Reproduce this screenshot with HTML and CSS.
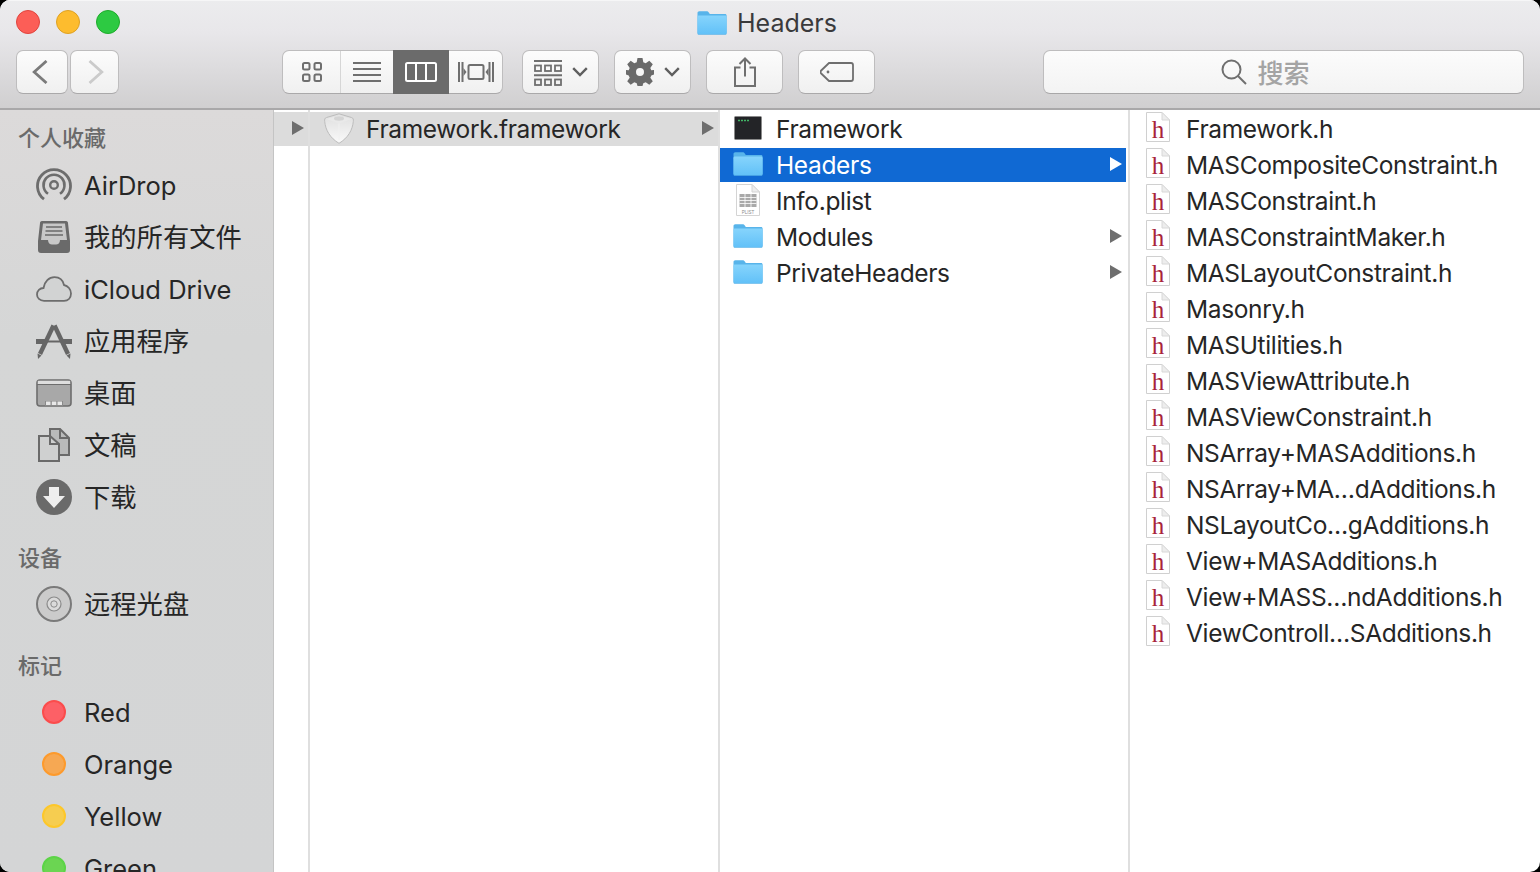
FILE: index.html
```html
<!DOCTYPE html>
<html lang="zh">
<head>
<meta charset="utf-8">
<title>Headers</title>
<link rel="stylesheet" href="styles.css">
</head>
<body>
<svg class="defs" width="0" height="0" aria-hidden="true">
  <defs>
    <linearGradient id="fg" x1="0" y1="0" x2="0" y2="1"><stop offset="0" stop-color="#86d4fc"/><stop offset="1" stop-color="#62c1f8"/></linearGradient>
    <linearGradient id="cube" x1="0" y1="0" x2="0" y2="1"><stop offset="0" stop-color="#dedede"/><stop offset="1" stop-color="#fafafa"/></linearGradient>
    <symbol id="folder" viewBox="0 0 30 24">
      <path d="M0.500 2.200C0.500 1 1.200 0.300 2.400 0.300H9.600C10.600 0.300 11.200 0.800 11.800 1.600L12.800 2.900H28C29 2.900 29.600 3.500 29.600 4.500V22.200C29.600 23.200 29 23.800 28 23.800H2C1 23.800 0.500 23.200 0.500 22.200Z" fill="#58b4ea"/>
      <path d="M0.500 6.200C0.500 5 1.200 4.600 2.200 4.600H28C29 4.600 29.600 5.100 29.600 6.200V21.600C29.600 22.600 29 23 28 23H2C1 23 0.500 22.600 0.500 21.600Z" fill="url(#fg)"/>
    </symbol>
    <symbol id="hfile" viewBox="0 0 24 30">
      <path d="M0.500 0.500H16L23.500 8V29.500H0.500Z" fill="#fff" stroke="#d0d0d0"/>
      <path d="M16 0.500V8H23.500Z" fill="#ededed" stroke="#d8d8d8"/>
    </symbol>
  </defs>
</svg>
<div class="window">
  <header class="toolbar">
    <div class="titlebar">
      <div class="lights">
        <span class="light red"></span><span class="light yellow"></span><span class="light green"></span>
      </div>
      <div class="title"><svg class="title-folder"><use href="#folder"/></svg><span>Headers</span></div>
    </div>
    <div class="tools">
      <div class="nav">
        <button class="btn back"><svg width="16" height="24" viewBox="0 0 16 24"><path d="M14.500 1L2.200 12L14.500 23" fill="none" stroke="#7b7b7b" stroke-width="2.800"/></svg></button>
        <button class="btn forward"><svg width="16" height="24" viewBox="0 0 16 24"><path d="M1.500 1L13.800 12L1.500 23" fill="none" stroke="#cbcbcb" stroke-width="2.800"/></svg></button>
      </div>
      <div class="seg">
        <div class="seg-cell c1"><svg width="22" height="22" viewBox="0 0 22 22" fill="none" stroke="#6f6f6f" stroke-width="2"><rect x="2" y="2" width="6.500" height="6.500" rx="1.500"/><rect x="13.500" y="2" width="6.500" height="6.500" rx="1.500"/><rect x="2" y="13.500" width="6.500" height="6.500" rx="1.500"/><rect x="13.500" y="13.500" width="6.500" height="6.500" rx="1.500"/></svg></div>
        <div class="seg-cell c2"><svg width="28" height="20" viewBox="0 0 28 20" fill="#6f6f6f"><rect y="0" width="28" height="2"/><rect y="6" width="28" height="2"/><rect y="12" width="28" height="2"/><rect y="18" width="28" height="2"/></svg></div>
        <div class="seg-cell c3"><svg width="32" height="20" viewBox="0 0 32 20" fill="none" stroke="#fff" stroke-width="2"><rect x="1" y="1" width="30" height="18" rx="1.500"/><path d="M11 1V19M21 1V19"/></svg></div>
        <div class="seg-cell c4"><svg width="36" height="20" viewBox="0 0 36 20"><g fill="#6f6f6f"><rect x="0" y="0" width="2" height="20"/><rect x="3.500" y="0" width="2" height="20"/><rect x="30.500" y="0" width="2" height="20"/><rect x="34" y="0" width="2" height="20"/><path d="M5.500 6L8.500 10L5.500 14Z"/><path d="M30.500 6L27.500 10L30.500 14Z"/></g><rect x="10.500" y="3" width="15" height="14" rx="1.500" fill="none" stroke="#6f6f6f" stroke-width="2"/></svg></div>
      </div>
      <button class="btn drop arrange">
        <svg class="arrange-icon" width="28" height="26" viewBox="0 0 28 26" fill="none" stroke="#6f6f6f" stroke-width="1.800"><path d="M0 1H28M0 15.200H28" stroke-width="2"/><rect x="1" y="5.500" width="6" height="5.500"/><rect x="11" y="5.500" width="6" height="5.500"/><rect x="21" y="5.500" width="6" height="5.500"/><rect x="1" y="19.500" width="6" height="5.500"/><rect x="11" y="19.500" width="6" height="5.500"/><rect x="21" y="19.500" width="6" height="5.500"/></svg>
        <svg class="chev" width="16" height="10" viewBox="0 0 16 10"><path d="M1.200 1.200L8 8L14.800 1.200" fill="none" stroke="#5f5f5f" stroke-width="2.400"/></svg>
      </button>
      <button class="btn drop gear">
        <svg width="28" height="28" viewBox="0 0 28 28"><path fill="#6a6a6a" fill-rule="evenodd" d="M11.500 0H16.500L17.300 4.300L19.700 5.300L23.300 2.800L26.800 6.300L24.300 9.900L25.300 12.200L28 12.100V16.600L25.300 17.400L24.300 19.700L26.800 23.300L23.300 26.800L19.700 24.300L17.300 25.300L16.500 28H11.500L10.700 25.300L8.300 24.300L4.700 26.800L1.200 23.300L3.700 19.700L2.700 17.400L0 16.600V12.100L2.700 12.200L3.700 9.900L1.200 6.300L4.700 2.800L8.300 5.300L10.700 4.300ZM14 10A4 4 0 1 0 14 18A4 4 0 1 0 14 10Z"/></svg>
        <svg class="chev" width="16" height="10" viewBox="0 0 16 10"><path d="M1.200 1.200L8 8L14.800 1.200" fill="none" stroke="#5f5f5f" stroke-width="2.400"/></svg>
      </button>
      <button class="btn wide share"><svg width="24" height="30" viewBox="0 0 24 30" fill="none" stroke="#6f6f6f" stroke-width="2"><path d="M7.500 10.500H2V29H22V10.500H16.500"/><path d="M12 19.500V1.500M6.500 7L12 1.500L17.500 7"/></svg></button>
      <button class="btn wide tag"><svg width="34" height="20" viewBox="0 0 34 20" fill="none" stroke="#6f6f6f" stroke-width="1.800"><path d="M9 1H31C32.200 1 33 1.800 33 3V17C33 18.200 32.200 19 31 19H9L1.200 11.500C0.400 10.700 0.400 9.300 1.200 8.500Z"/><circle cx="8" cy="10" r="1.400" fill="#6f6f6f" stroke="none"/></svg></button>
      <div class="search">
        <svg width="26" height="26" viewBox="0 0 26 26" fill="none" stroke="#6f6f6f" stroke-width="2"><circle cx="10.500" cy="10.500" r="9"/><path d="M17 17L25 25"/></svg>
        <span>搜索</span>
      </div>
    </div>
  </header>
  <div class="main">
    <aside class="sidebar">
      <h2 class="side-head first">个人收藏</h2>
      <div class="side-item"><span class="side-icon"><svg width="36" height="36" viewBox="0 0 36 36" fill="none" stroke="#6d6d6d"><circle cx="18" cy="18" r="3.800" stroke-width="2.400"/><path d="M12 26.800A10.500 10.500 0 1 1 24 26.800" stroke-width="2.600"/><path d="M8 32.200A16.500 16.500 0 1 1 28 32.200" stroke-width="2.800"/></svg></span><span>AirDrop</span></div>
      <div class="side-item"><span class="side-icon"><svg width="32" height="32" viewBox="0 0 32 32"><path d="M4 0H28C29.500 0 30 1 30 2L32 20V29C32 31 31 32 29 32H3C1 32 0 31 0 29V20L2 2C2 1 2.500 0 4 0Z" fill="#6a6a6a"/><path d="M5 2.500H27L29 19H22C22 22 20 23.500 18 23.500H14C12 23.500 10 22 10 19H3Z" fill="#c8c8c8"/><path d="M8 6H24M7.500 10H24.500M7 14H25" stroke="#6a6a6a" stroke-width="1.600"/></svg></span><span class="cjk">我的所有文件</span></div>
      <div class="side-item"><span class="side-icon"><svg width="36" height="26" viewBox="0 0 36 26"><path d="M8 24.800C3.800 24.800 1 22 1 18.500C1 14.800 3.800 12 7.500 12C8.500 5.500 13 1.200 18.500 1.200C23.500 1.200 27 4.500 28 9C32 9.800 35 13.500 35 17.500C35 22 32 24.800 28 24.800Z" fill="#d2d3d3" stroke="#6d6d6d" stroke-width="1.800"/></svg></span><span>iCloud Drive</span></div>
      <div class="side-item"><span class="side-icon"><svg width="36" height="35" viewBox="0 0 36 35" fill="none" stroke="#666"><path d="M18.500 1.500L32 30" stroke-width="4.400"/><path d="M17.500 1.500L4 30" stroke-width="4.400"/><path d="M0 17.500H9M27 17.500H36" stroke-width="5"/><path d="M9 17.500H27" stroke-width="2"/><path d="M1.500 29.500L5.500 31.500L2 35Z" fill="#666" stroke="none"/><path d="M34.500 29.500L30.500 31.500L34 35Z" fill="#666" stroke="none"/></svg></span><span class="cjk">应用程序</span></div>
      <div class="side-item"><span class="side-icon"><svg width="36" height="28" viewBox="0 0 36 28"><rect x="1" y="1" width="34" height="26" rx="3" fill="#a8a8a8" stroke="#6d6d6d" stroke-width="1.600"/><rect x="1.800" y="1.800" width="32.400" height="3.600" fill="#dedede"/><path d="M1 5.500H35" stroke="#6d6d6d"/><rect x="9" y="22" width="18" height="5" fill="#8a8a8a"/><g fill="#e8e8e8"><rect x="10" y="22.500" width="4.500" height="3.500"/><rect x="15.800" y="22.500" width="4.500" height="3.500"/><rect x="21.500" y="22.500" width="4.500" height="3.500"/></g></svg></span><span class="cjk">桌面</span></div>
      <div class="side-item"><span class="side-icon"><svg width="32" height="34" viewBox="0 0 32 34" stroke="#6a6a6a" stroke-width="2"><path d="M12 1H22L31 10V27H12Z" fill="#b9baba"/><path d="M22 1V10H31" fill="none"/><path d="M1 8H12L21 16V33H1Z" fill="#cfd0d0"/><path d="M12 8V16H21" fill="none"/></svg></span><span class="cjk">文稿</span></div>
      <div class="side-item"><span class="side-icon"><svg width="36" height="36" viewBox="0 0 36 36"><circle cx="18" cy="18" r="18" fill="#6a6a6a"/><path d="M13 8H23V17H29L18 29L7 17H13Z" fill="#eeeeee"/></svg></span><span class="cjk">下载</span></div>
      <h2 class="side-head">设备</h2>
      <div class="side-item"><span class="side-icon"><svg width="36" height="36" viewBox="0 0 36 36" fill="none"><circle cx="18" cy="18" r="17" fill="#cbcbcb" stroke="#7a7a7a" stroke-width="2"/><circle cx="18" cy="18" r="7" fill="#dadada" stroke="#8a8a8a" stroke-width="1.200"/><circle cx="18" cy="18" r="3.200" stroke="#8a8a8a" stroke-width="1"/></svg></span><span class="cjk">远程光盘</span></div>
      <h2 class="side-head tags-head">标记</h2>
      <div class="side-item"><span class="side-icon"><span class="tag-dot t-red"></span></span><span>Red</span></div>
      <div class="side-item"><span class="side-icon"><span class="tag-dot t-orange"></span></span><span>Orange</span></div>
      <div class="side-item"><span class="side-icon"><span class="tag-dot t-yellow"></span></span><span>Yellow</span></div>
      <div class="side-item"><span class="side-icon"><span class="tag-dot t-green"></span></span><span>Green</span></div>
    </aside>
    <section class="col col-0">
      <div class="row row-grey"><span class="arrow"></span></div>
    </section>
    <section class="col col-1">
      <div class="row row-grey"><span class="ficon bundle"><svg width="30" height="31" viewBox="0 0 30 31"><path d="M15 0.800L27.500 4.500C29.500 5.200 29.500 6.500 29.300 8.500C28.500 17 24 25 15 30.300C6 25 1.500 17 0.700 8.500C0.500 6.500 0.500 5.200 2.500 4.500Z" fill="url(#cube)" stroke="#bcbcbc"/><path d="M15 2.500L27.500 6L15 10.500L2.500 6Z" fill="#e9e9e9"/><ellipse cx="15" cy="5.500" rx="5" ry="2.200" fill="#d4d4d4"/><path d="M15 10.500V27" stroke="#f0f0f0"/></svg></span><span class="name">Framework.framework</span><span class="arrow"></span></div>
    </section>
    <section class="col col-2">
      <div class="row"><span class="ficon"><svg width="28" height="24" viewBox="0 0 28 24"><rect x="0.500" y="0.500" width="27" height="23" rx="1" fill="#232427" stroke="#8a8a8a"/><path d="M4 4.500H15" stroke="#41b565" stroke-width="1.600" stroke-dasharray="2 1"/></svg></span><span class="name">Framework</span></div>
      <div class="row selected"><span class="ficon"><svg class="folder"><use href="#folder"/></svg></span><span class="name">Headers</span><span class="arrow"></span></div>
      <div class="row"><span class="ficon"><svg width="24" height="32" viewBox="0 0 24 32"><path d="M0.500 0.500H16L23.500 8V31.500H0.500Z" fill="#fff" stroke="#d4d4d4"/><path d="M16 0.500V8H23.500Z" fill="#eee" stroke="#d4d4d4"/><g fill="#a9a9a9"><rect x="3.500" y="10" width="17" height="13"/></g><path d="M3.500 13.500H20.500M3.500 16.500H20.500M3.500 19.500H20.500M9 10V23M15 10V23" stroke="#fff" stroke-width="0.800"/><text x="12" y="29.500" class="plist-label">PLIST</text></svg></span><span class="name">Info.plist</span></div>
      <div class="row"><span class="ficon"><svg class="folder"><use href="#folder"/></svg></span><span class="name">Modules</span><span class="arrow"></span></div>
      <div class="row"><span class="ficon"><svg class="folder"><use href="#folder"/></svg></span><span class="name">PrivateHeaders</span><span class="arrow"></span></div>
    </section>
    <section class="col col-3">
      <div class="row"><span class="hicon"><svg class="hpage"><use href="#hfile"/></svg><span class="hletter">h</span></span><span class="name">Framework.h</span></div>
      <div class="row"><span class="hicon"><svg class="hpage"><use href="#hfile"/></svg><span class="hletter">h</span></span><span class="name">MASCompositeConstraint.h</span></div>
      <div class="row"><span class="hicon"><svg class="hpage"><use href="#hfile"/></svg><span class="hletter">h</span></span><span class="name">MASConstraint.h</span></div>
      <div class="row"><span class="hicon"><svg class="hpage"><use href="#hfile"/></svg><span class="hletter">h</span></span><span class="name">MASConstraintMaker.h</span></div>
      <div class="row"><span class="hicon"><svg class="hpage"><use href="#hfile"/></svg><span class="hletter">h</span></span><span class="name">MASLayoutConstraint.h</span></div>
      <div class="row"><span class="hicon"><svg class="hpage"><use href="#hfile"/></svg><span class="hletter">h</span></span><span class="name">Masonry.h</span></div>
      <div class="row"><span class="hicon"><svg class="hpage"><use href="#hfile"/></svg><span class="hletter">h</span></span><span class="name">MASUtilities.h</span></div>
      <div class="row"><span class="hicon"><svg class="hpage"><use href="#hfile"/></svg><span class="hletter">h</span></span><span class="name">MASViewAttribute.h</span></div>
      <div class="row"><span class="hicon"><svg class="hpage"><use href="#hfile"/></svg><span class="hletter">h</span></span><span class="name">MASViewConstraint.h</span></div>
      <div class="row"><span class="hicon"><svg class="hpage"><use href="#hfile"/></svg><span class="hletter">h</span></span><span class="name">NSArray+MASAdditions.h</span></div>
      <div class="row"><span class="hicon"><svg class="hpage"><use href="#hfile"/></svg><span class="hletter">h</span></span><span class="name">NSArray+MA…dAdditions.h</span></div>
      <div class="row"><span class="hicon"><svg class="hpage"><use href="#hfile"/></svg><span class="hletter">h</span></span><span class="name">NSLayoutCo…gAdditions.h</span></div>
      <div class="row"><span class="hicon"><svg class="hpage"><use href="#hfile"/></svg><span class="hletter">h</span></span><span class="name">View+MASAdditions.h</span></div>
      <div class="row"><span class="hicon"><svg class="hpage"><use href="#hfile"/></svg><span class="hletter">h</span></span><span class="name">View+MASS…ndAdditions.h</span></div>
      <div class="row"><span class="hicon"><svg class="hpage"><use href="#hfile"/></svg><span class="hletter">h</span></span><span class="name">ViewControll…SAdditions.h</span></div>
    </section>
  </div>
</div>
</body>
</html>
```
FILE: styles.css
```css
* { box-sizing: border-box; }
html, body { margin: 0; height: 100%; background: #000; overflow: hidden; }
body { font-family: Inter, "Noto Sans CJK SC", "Noto Sans", sans-serif; color: #262626; }
.defs { position: absolute; }
.window { width: 1540px; height: 872px; display: flex; flex-direction: column; border-radius: 10px; overflow: hidden; background: #fff; }

.toolbar { height: 110px; flex: none; background: linear-gradient(#ececee 0, #e8e7ea 30%, #d0cfd0 100%); border-bottom: 2px solid #a9a8a9; box-shadow: inset 0 1px 0 #f6f6f7; }
.titlebar { height: 50px; position: relative; display: flex; align-items: center; justify-content: center; padding: 0 6px 4px 0; }
.lights { position: absolute; left: 16px; top: 10px; display: flex; gap: 16px; }
.light { width: 24px; height: 24px; border-radius: 50%; border: 1px solid; }
.red { background: #fc5e57; border-color: #e0443e; }
.yellow { background: #fdbc2e; border-color: #dea123; }
.green { background: #2dca42; border-color: #1eab2b; }
.title { display: flex; align-items: center; gap: 10px; font-size: 25px; color: #3a3a3c; }
.title-folder { width: 30px; height: 24px; }

.tools { display: flex; height: 44px; padding-left: 16px; }
.btn { height: 44px; border: 1px solid #bebdbe; border-bottom-color: #aaa9aa; border-radius: 7px; background: linear-gradient(#fcfcfc, #f0f0f0); display: flex; align-items: center; justify-content: center; padding: 0; }
.nav { display: flex; gap: 2px; margin-right: 163px; }
.back { width: 52px; padding-right: 4px; }
.forward { width: 49px; padding-left: 3px; }
.seg { width: 221px; height: 44px; display: flex; border: 1px solid #bebdbe; border-bottom-color: #aaa9aa; border-radius: 7px; background: linear-gradient(#fcfcfc, #f0f0f0); margin-right: 19px; }
.seg-cell { display: flex; align-items: center; justify-content: center; height: 100%; }
.c1 { width: 58px; border-right: 1px solid #d6d6d6; }
.c2 { width: 52px; }
.c3 { width: 56px; height: calc(100% + 2px); margin: -1px 0; background: #6b6b6b; }
.c4 { flex: 1; }
.drop { width: 77px; gap: 10px; margin-right: 15px; }
.drop .chev { flex: none; }
.arrange-icon { margin-top: 1px; }
.wide { width: 77px; margin-right: 15px; }
.search { width: 481px; height: 44px; margin-left: 153px; padding: 0 36px 0 0; border: 1px solid #bebdbe; border-bottom-color: #a8a7a8; border-radius: 7px; background: linear-gradient(#fcfcfc, #f3f3f3); display: flex; align-items: center; justify-content: center; gap: 10px; font-size: 26px; font-weight: 500; color: #a4a4a4; }
.search span { margin-top: -2px; }

.main { flex: 1; display: flex; min-height: 0; }
.sidebar { width: 274px; flex: none; background: linear-gradient(#dcdada, #d5d6d6 30%, #d4d5d6); border-right: 1px solid #c4c4c4; overflow: hidden; padding-top: 13px; }
.side-head { margin: 20px 0 5px; height: 30px; line-height: 30px; padding-left: 18px; font-size: 22px; font-weight: 500; color: #6a6a6a; }
.side-head.first { margin: 0 0 6px; }
.side-head.tags-head { margin-top: 21px; }
.side-item { height: 52px; display: flex; align-items: center; font-size: 25.500px; color: #262626; padding-left: 36px; }
.cjk { font-size: 26.300px; padding-bottom: 4px; }
.side-icon { width: 36px; height: 36px; flex: none; display: flex; align-items: center; justify-content: center; margin-right: 12px; }
.tag-dot { width: 24px; height: 24px; border-radius: 50%; border: 2px solid; }
.t-red { background: #fd6066; border-color: #fb4c4c; }
.t-orange { background: #f6a853; border-color: #fd9a2c; }
.t-yellow { background: #f6cd50; border-color: #fdc72a; }
.t-green { background: #6bd552; border-color: #5cd447; }

.col { flex: none; height: 100%; padding-top: 2px; border-right: 2px solid #dfdfdf; overflow: hidden; }
.col-0 { width: 36px; }
.col-1 { width: 410px; }
.col-2 { width: 410px; }
.col-2 .row { margin-right: 2px; }
.col-3 { flex: 1; border-right: 0; }
.row { height: 34px; margin-bottom: 2px; display: flex; align-items: center; font-size: 24.500px; letter-spacing: -0.350px; position: relative; }
.row-grey { background: #dcdcdc; }
.col-0 .row { padding-left: 18px; }
.selected { background: #1069d3; color: #fff; }
.ficon { width: 30px; height: 34px; flex: none; display: flex; align-items: center; justify-content: center; overflow: visible; margin-left: 13px; margin-right: 13px; padding-bottom: 2px; }
.folder { width: 30px; height: 24px; flex: none; }
.name { flex: 1; white-space: nowrap; margin-top: -1px; }
.arrow { width: 0; height: 0; flex: none; border-left: 12px solid #6e6e6e; border-top: 7.500px solid transparent; border-bottom: 7.500px solid transparent; margin: 0 4px 2px 0; }
.selected .arrow { border-left-color: #fff; }
.col-1 .ficon { margin-left: 14px; margin-right: 12px; }
.hicon { width: 24px; height: 30px; flex: none; margin: -4px 16px 0; display: grid; }
.hpage { grid-area: 1 / 1; width: 24px; height: 30px; }
.hletter { grid-area: 1 / 1; font-family: "Liberation Serif", serif; font-size: 25px; line-height: 35px; letter-spacing: 0; color: #a7243a; text-align: center; }
.plist-label { font-family: "Liberation Sans", sans-serif; font-size: 4.500px; letter-spacing: 0; fill: #8a8a8a; text-anchor: middle; }
```
